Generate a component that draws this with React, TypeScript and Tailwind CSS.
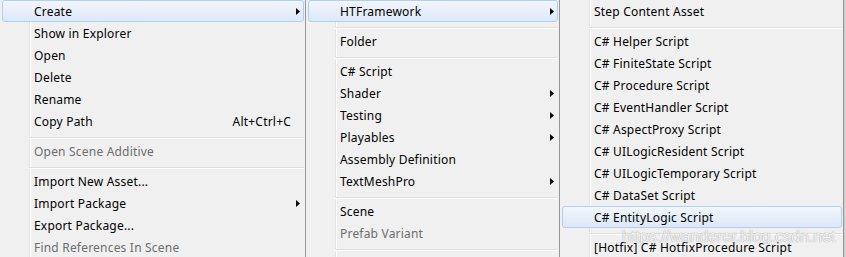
import React from 'react'

type Entry =
  | { label: string; disabled?: boolean; sub?: boolean; shortcut?: string; active?: boolean }
  | 'sep'

const assetsMenu: Entry[] = [
  { label: 'Create', sub: true, active: true },
  { label: 'Show in Explorer' },
  { label: 'Open' },
  { label: 'Delete' },
  { label: 'Rename' },
  { label: 'Copy Path', shortcut: 'Alt+Ctrl+C' },
  'sep',
  { label: 'Open Scene Additive', disabled: true },
  'sep',
  { label: 'Import New Asset...' },
  { label: 'Import Package', sub: true },
  { label: 'Export Package...' },
  { label: 'Find References In Scene', disabled: true },
]

const createMenu: Entry[] = [
  { label: 'HTFramework', sub: true, active: true },
  'sep',
  { label: 'Folder' },
  'sep',
  { label: 'C# Script' },
  { label: 'Shader', sub: true },
  { label: 'Testing', sub: true },
  { label: 'Playables', sub: true },
  { label: 'Assembly Definition' },
  { label: 'TextMeshPro', sub: true },
  'sep',
  { label: 'Scene' },
  { label: 'Prefab Variant', disabled: true },
  'sep',
]

const frameworkMenu: Entry[] = [
  { label: 'Step Content Asset' },
  'sep',
  { label: 'C# Helper Script' },
  { label: 'C# FiniteState Script' },
  { label: 'C# Procedure Script' },
  { label: 'C# EventHandler Script' },
  { label: 'C# AspectProxy Script' },
  { label: 'C# UILogicResident Script' },
  { label: 'C# UILogicTemporary Script' },
  { label: 'C# DataSet Script' },
  { label: 'C# EntityLogic Script', active: true },
  'sep',
  { label: '[Hotfix] C# HotfixProcedure Script' },
]

function SubArrow() {
  return (
    <svg width="4" height="7" viewBox="0 0 4 7" className="shrink-0">
      <polygon points="0,0 4,3.5 0,7" fill="#000" />
    </svg>
  )
}

function Panel({ items, className }: { items: Entry[]; className: string }) {
  return (
    <div className={`relative h-[257px] shrink-0 overflow-hidden border-l border-[#979797] bg-[#f0f0f0] ${className}`}>
      {/* icon gutter line */}
      <div className="absolute top-0 bottom-0 left-[29px] w-px bg-[#e2e3e3]" />
      <div className="absolute top-0 bottom-0 left-[30px] w-px bg-white" />

      <div className="relative flex flex-col">
        {items.map((item, i) => {
          if (item === 'sep') {
            return (
              <div key={i} className="h-2 pl-[29px] pr-px pt-[5px]">
                <div className="h-px bg-[#e0e0e0]" />
                <div className="h-px bg-white" />
              </div>
            )
          }
          return (
            <div
              key={i}
              className={`ml-[2px] mr-px flex h-[22px] items-center rounded-[3px] border pl-[31px] pr-[3px] ${
                item.active
                  ? 'border-[#aecff7] bg-gradient-to-b from-[#f2f6fc] to-[#dde8f7]'
                  : 'border-transparent'
              }`}
            >
              <span className={`flex-1 whitespace-nowrap leading-[22px] pt-px ${item.disabled ? 'text-[#6d6d6d]' : 'text-black'}`}>
                {item.label}
              </span>
              {item.shortcut && <span className="mr-[9px] whitespace-nowrap pt-px">{item.shortcut}</span>}
              {item.sub && <SubArrow />}
            </div>
          )
        })}
      </div>
    </div>
  )
}

export default function App() {
  return (
    <div className="relative h-[257px] w-[846px] overflow-hidden bg-[#f0f0f0] font-['Noto_Sans',sans-serif] text-[12px] tracking-[0.2px]">
      <div className="flex">
        <Panel items={assetsMenu} className="-ml-px w-[306px]" />
        <Panel items={createMenu} className="w-[254px]" />
        <Panel items={frameworkMenu} className="w-[285px] border-r" />
        <div className="h-[257px] w-[2px] shrink-0 bg-gradient-to-r from-[#bdbdbd] to-[#e4e4e4]" />
      </div>

      {/* blog watermark */}
      <div className="absolute left-[622px] top-[225px] font-['Liberation_Sans',sans-serif] text-[16px] tracking-normal text-white/90 [text-shadow:0_0_1px_rgba(0,0,0,0.5)]">
        https://wanderer.blog.csdn.net
      </div>
    </div>
  )
}
